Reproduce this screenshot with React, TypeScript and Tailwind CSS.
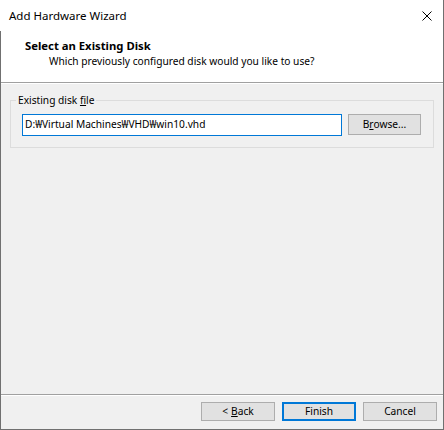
function WinButton({
  children,
  primary = false,
  className = '',
}: {
  children: React.ReactNode
  primary?: boolean
  className?: string
}) {
  return (
    <button
      type="button"
      className={`flex h-[19px] items-center justify-center bg-[#e1e1e1] text-[10.2px] leading-none text-black ${
        primary ? 'border-2 border-[#0078d7]' : 'border border-[#adadad]'
      } ${className}`}
    >
      {children}
    </button>
  )
}

export default function App() {
  return (
    <div className="flex h-[430px] w-[444px] flex-col bg-[#f0f0f0] font-['Noto_Sans','Noto_Sans_CJK_KR',sans-serif] text-[10.2px] text-black">
      {/* title bar */}
      <div className="flex h-[31px] items-center justify-between border-r border-[#707070] bg-white pl-[9px] pr-[11px]">
        <span className="text-[11.5px] leading-[16px]">Add Hardware Wizard</span>
        <svg viewBox="0 0 10 10" className="h-[10px] w-[10px]" aria-hidden="true">
          <path d="M0.5 0.5L9.5 9.5M9.5 0.5L0.5 9.5" stroke="#000" strokeWidth="1" />
        </svg>
      </div>

      <div className="flex flex-1 flex-col border-x border-b border-[#707070]">
        {/* header */}
        <div className="h-[51px] bg-white pl-[24px] pt-[7px]">
          <p className="text-[11.3px] font-bold leading-[15px]">Select an Existing Disk</p>
          <p className="pl-[24px] pt-[1px] leading-[15px]">Which previously configured disk would you like to use?</p>
        </div>
        <div className="h-px bg-[#a0a0a0]" />
        <div className="h-px bg-white" />

        {/* body */}
        <div className="flex-1 pt-[8px]">
          <fieldset className="ml-[9px] w-[424px] border border-[#dcdcdc] pb-[11px]">
            <legend className="ml-[5px] px-[2px] leading-[16px]">
              Existing disk <span className="underline">f</span>ile
            </legend>
            <div className="mx-[11px] mt-[6px] flex items-start gap-[6px]">
              <div className="flex h-[22px] w-[320px] items-center border border-[#0078d7] bg-white pb-[2px] pl-[2px] leading-[16px]">
                D:₩Virtual Machines₩VHD₩win10.vhd
              </div>
              <WinButton className="h-[21px] w-[73px]">
                B<span className="underline">r</span>owse...
              </WinButton>
            </div>
          </fieldset>
        </div>

        <div className="h-px bg-[#a0a0a0]" />
        <div className="h-px bg-white" />

        {/* footer */}
        <div className="flex h-[33px] items-start justify-end gap-[7px] pr-[6px] pt-[6px]">
          <WinButton className="w-[74px]">
            &lt; <span className="ml-[3px] underline">B</span>ack
          </WinButton>
          <WinButton primary className="w-[74px]">
            Finish
          </WinButton>
          <WinButton className="w-[74px]">Cancel</WinButton>
        </div>
      </div>
    </div>
  )
}
